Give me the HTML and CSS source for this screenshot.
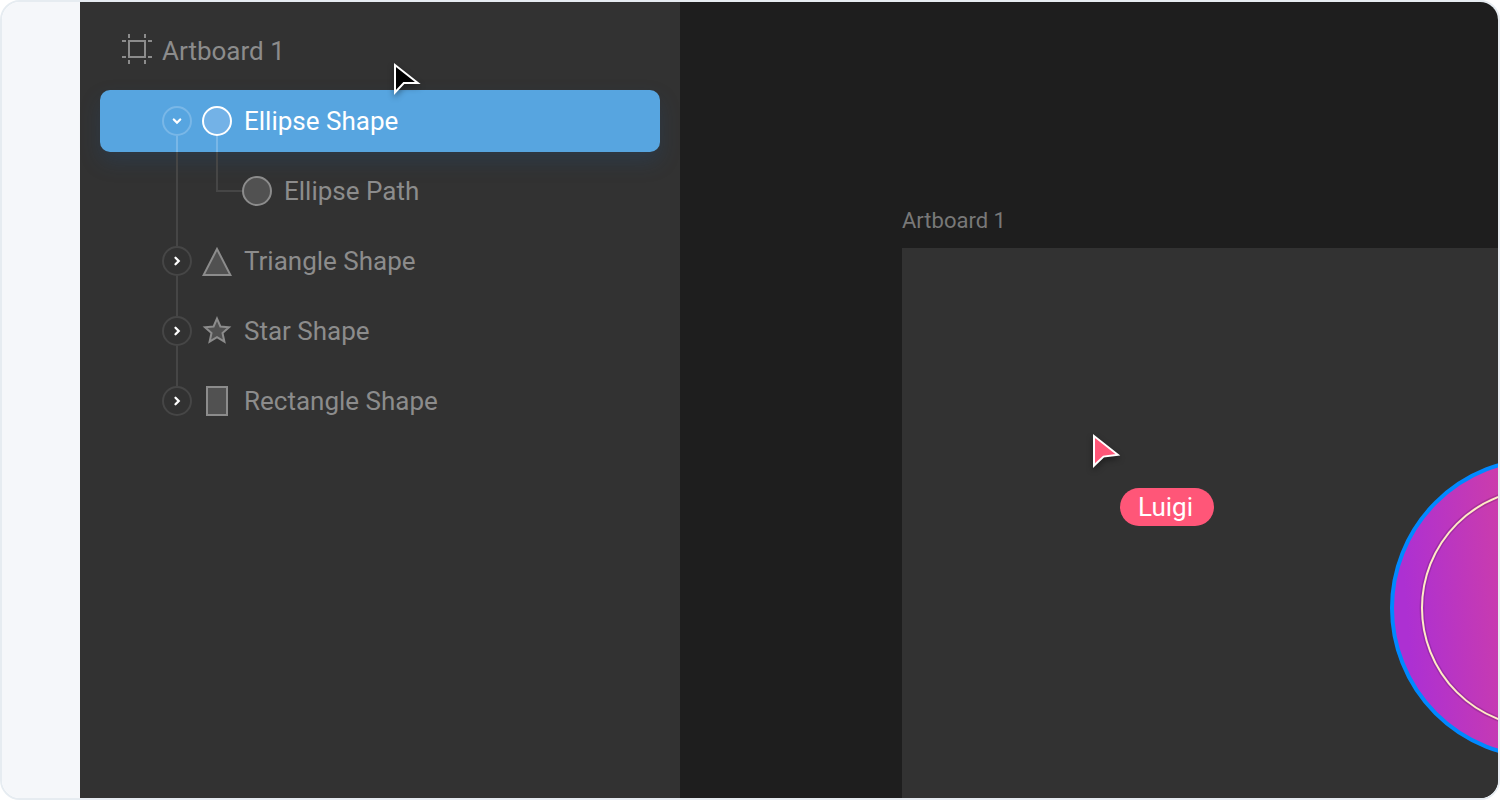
FILE: index.html
```html
<!DOCTYPE html>
<html lang="en">
<head>
<meta charset="utf-8">
<title>Artboard hierarchy</title>
<link rel="stylesheet" href="styles.css">
</head>
<body>
<main class="frame">
  <div class="gutter"></div>
  <aside class="sidebar">
    <header class="tree-title">
      <svg class="icon" width="30" height="30" viewBox="0 0 30 30" fill="none" stroke="#8c8c8c" stroke-width="2"><rect x="7" y="7" width="16" height="16"/><path d="M7 0v4M23 0v4M7 26v4M23 26v4M0 7h4M0 23h4M26 7h4M26 23h4"/></svg>
      <span>Artboard 1</span>
    </header>
    <ul class="tree">
      <li class="row selected">
        <span class="line trunk-first"></span>
        <span class="line branch"></span>
        <svg class="toggle" width="30" height="30" viewBox="0 0 30 30" fill="none"><circle cx="15" cy="15" r="14" stroke="#79b7e7" stroke-width="2"/><path d="M11.8 13.5l3.2 3.2 3.2-3.2" stroke="#fff" stroke-width="2.3" stroke-linecap="round"/></svg>
        <svg class="icon" width="30" height="30" viewBox="0 0 30 30"><circle cx="15" cy="15" r="14" fill="#73b2e7" stroke="#fff" stroke-width="2"/></svg>
        <span class="label">Ellipse Shape</span>
      </li>
      <li class="row child">
        <svg class="icon" width="30" height="30" viewBox="0 0 30 30"><circle cx="15" cy="15" r="14" fill="#515151" stroke="#8c8c8c" stroke-width="2"/></svg>
        <span class="label">Ellipse Path</span>
      </li>
      <li class="row">
        <span class="line trunk"></span>
        <svg class="toggle" width="30" height="30" viewBox="0 0 30 30" fill="none"><circle cx="15" cy="15" r="14" stroke="#464646" stroke-width="2"/><path d="M13.5 11.8l3.2 3.2-3.2 3.2" stroke="#fff" stroke-width="2.3" stroke-linecap="round"/></svg>
        <svg class="icon" width="30" height="30" viewBox="0 0 30 30"><path d="M15 3L28.4 29H1.6Z" fill="#515151" stroke="#8c8c8c" stroke-width="2"/></svg>
        <span class="label">Triangle Shape</span>
      </li>
      <li class="row">
        <span class="line trunk"></span>
        <svg class="toggle" width="30" height="30" viewBox="0 0 30 30" fill="none"><circle cx="15" cy="15" r="14" stroke="#464646" stroke-width="2"/><path d="M13.5 11.8l3.2 3.2-3.2 3.2" stroke="#fff" stroke-width="2.3" stroke-linecap="round"/></svg>
        <svg class="icon" width="30" height="30" viewBox="0 0 30 30"><path d="M15 2.6L18.4 10.5L27 11.3L20.5 17L22.4 25.7L15 21.2L7.6 25.7L9.5 17L3 11.3L11.6 10.5Z" fill="#515151" stroke="#8c8c8c" stroke-width="2"/></svg>
        <span class="label">Star Shape</span>
      </li>
      <li class="row">
        <svg class="toggle" width="30" height="30" viewBox="0 0 30 30" fill="none"><circle cx="15" cy="15" r="14" stroke="#464646" stroke-width="2"/><path d="M13.5 11.8l3.2 3.2-3.2 3.2" stroke="#fff" stroke-width="2.3" stroke-linecap="round"/></svg>
        <svg class="icon" width="30" height="30" viewBox="0 0 30 30"><rect x="5" y="1" width="20" height="28" fill="#515151" stroke="#8c8c8c" stroke-width="2"/></svg>
        <span class="label">Rectangle Shape</span>
      </li>
    </ul>
  </aside>
  <section class="stage">
    <div class="stage-label">Artboard 1</div>
    <div class="artboard">
      <svg class="ellipse" width="304" height="304" viewBox="0 0 304 304">
        <defs>
          <linearGradient id="fill" gradientUnits="userSpaceOnUse" x1="18" y1="164" x2="287" y2="140"><stop offset="0" stop-color="#ad30d2"/><stop offset=".34" stop-color="#c83bb0"/><stop offset="1" stop-color="#f84e74"/></linearGradient>
        </defs>
        <circle cx="152" cy="152" r="149" fill="url(#fill)" stroke="#0089ff" stroke-width="4"/>
        <circle cx="152" cy="152" r="119" fill="none" stroke="#000" stroke-opacity=".14" stroke-width="5"/>
        <circle cx="152" cy="152" r="119" fill="none" stroke="#ffecc5" stroke-width="2"/>
      </svg>
    </div>
  </section>
  <svg class="cursor cursor-own" width="40" height="48" viewBox="0 0 40 48"><path d="M5 5V32.4L13.8 23H27.8Z" fill="#000" stroke="#fff" stroke-width="2"/></svg>
  <svg class="cursor cursor-guest" width="40" height="48" viewBox="0 0 40 48"><path d="M5 5V34.6L14.5 25.6L28.8 23.8Z" fill="#ff5678" stroke="#fff" stroke-width="2"/></svg>
  <span class="guest-name">Luigi</span>
</main>
</body>
</html>
```
FILE: styles.css
```css
* { box-sizing: border-box; }

body {
  margin: 0;
  background: #fff;
  font-family: Roboto, "Liberation Sans", sans-serif;
}

.frame {
  position: relative;
  display: flex;
  width: 1500px;
  height: 800px;
  overflow: hidden;
  border: 2px solid #e6ecf1;
  border-radius: 20px;
}

.gutter {
  flex: 0 0 78px;
  background: #f5f7fa;
}

.sidebar {
  flex: 0 0 600px;
  padding: 14px 20px 0;
  background: #323232;
  color: #8c8c8c;
  font-size: 26px;
  line-height: 70px;
}

.tree-title {
  display: flex;
  align-items: center;
  gap: 10px;
  height: 70px;
  padding-left: 22px;
}

.tree-title .icon { margin-bottom: 4px; }

.tree {
  display: flex;
  flex-direction: column;
  gap: 8px;
  margin: 0;
  padding: 4px 0 0;
  list-style: none;
}

.row {
  position: relative;
  display: flex;
  align-items: center;
  height: 62px;
  padding-left: 62px;
  line-height: 62px;
}

.toggle { margin-right: 10px; }
.label { margin-left: 12px; }
.child { padding-left: 142px; }

.selected {
  border-radius: 10px;
  background: #57a5e0;
  box-shadow: 0 10px 20px rgba(30, 80, 130, 0.25);
  color: #fff;
}

.line {
  position: absolute;
  top: 46px;
  left: 76px;
  width: 2px;
  height: 40px;
  background: #464646;
}

.trunk-first {
  height: 110px;
  background: linear-gradient(#79b7e7 16px, #464646 16px);
}

.branch {
  left: 116px;
  width: 26px;
  height: 56px;
  background:
    linear-gradient(#79b7e7 16px, #464646 16px) left top / 2px 100% no-repeat,
    linear-gradient(#464646, #464646) left bottom / 100% 2px no-repeat;
}

.stage {
  position: relative;
  flex: 1;
  min-width: 0;
  display: flex;
  flex-direction: column;
  padding: 204px 0 0 222px;
  background: #1e1e1e;
}

.stage-label {
  height: 42px;
  color: #787878;
  font-size: 22px;
  line-height: 30px;
}

.artboard {
  flex: 1;
  overflow: hidden;
  padding: 208px 0 0 487px;
  background: #323232;
}

.ellipse { display: block; }

.cursor {
  position: absolute;
  filter: drop-shadow(0 3px 3px rgba(0, 0, 0, 0.4));
}

.cursor-own { left: 388px; top: 58px; }
.cursor-guest { left: 1087px; top: 429px; }

.guest-name {
  position: absolute;
  left: 1118px;
  top: 486px;
  width: 94px;
  height: 38px;
  padding-left: 18px;
  border-radius: 19px;
  background: #ff5678;
  color: #fff;
  font-size: 26px;
  line-height: 38px;
}
```
